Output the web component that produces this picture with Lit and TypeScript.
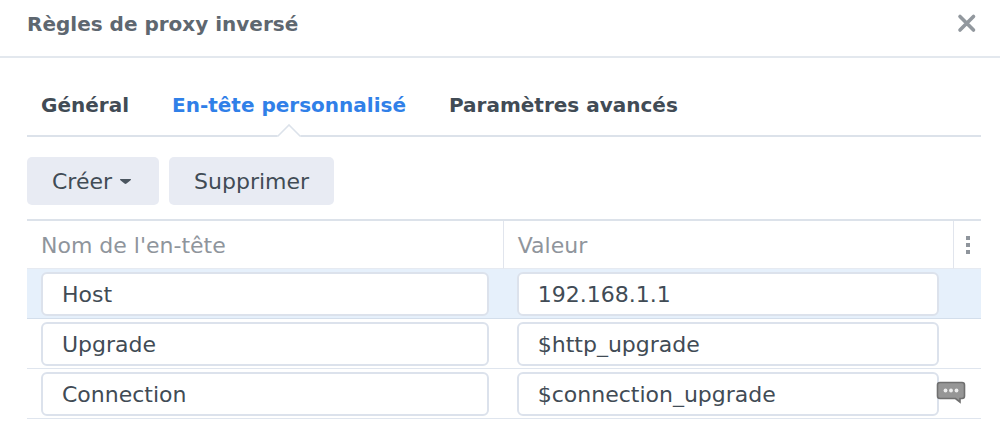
import { LitElement, html, css } from "lit";
import { customElement, state } from "lit/decorators.js";
import { classMap } from "lit/directives/class-map.js";

interface HeaderRule {
  name: string;
  value: string;
}

@customElement("app-root")
export class AppRoot extends LitElement {
  static styles = css`
    :host {
      display: block;
      background: #fff;
      color: #414b55;
      font-family: "DejaVu Sans", Verdana, sans-serif;
      font-size: 22px;
      line-height: 28px;
    }
    * {
      box-sizing: border-box;
    }
    button,
    input {
      font: inherit;
      color: inherit;
      margin: 0;
    }
    button {
      border: 0;
      padding: 0;
      background: none;
      cursor: pointer;
    }
    .titlebar {
      display: flex;
      align-items: center;
      justify-content: space-between;
      padding: 10px 22px 18px 27px;
      border-bottom: 2px solid #e3e8ee;
    }
    .title {
      margin: 0;
      font-size: 20px;
      line-height: 28px;
      font-weight: bold;
      color: #5e6770;
    }
    .close {
      display: flex;
    }
    .content {
      padding: 32px 19px 0 27px;
    }
    .tabs {
      display: flex;
      gap: 43px;
      padding: 0 14px;
      border-bottom: 2px solid #dce2ea;
    }
    .tab {
      position: relative;
      padding: 1px 0 16px;
      font-size: 20px;
      font-weight: bold;
    }
    .active {
      color: #3080e8;
    }
    .notch {
      position: absolute;
      left: calc(50% - 13px);
      bottom: -2px;
    }
    .toolbar {
      display: flex;
      gap: 10px;
      padding: 20px 0 14px;
    }
    .action {
      display: flex;
      align-items: center;
      gap: 8px;
      padding: 11px 25px 9px;
      border-radius: 5px;
      background: #e8ebf3;
    }
    .grid {
      width: 100%;
      table-layout: fixed;
      border-collapse: separate;
      border-spacing: 0;
      border-top: 2px solid #dce2ea;
    }
    .col-value {
      width: 47.2%;
    }
    .col-menu {
      width: 28px;
    }
    th {
      padding: 11px 14px 8px;
      border-bottom: 1px solid #e6eaf1;
      text-align: left;
      font-weight: normal;
      color: #8f959c;
    }
    th + th {
      border-left: 1px solid #e1e5ed;
    }
    th.menu-cell {
      padding: 0;
      vertical-align: middle;
    }
    .menu {
      display: flex;
      justify-content: center;
      width: 100%;
    }
    td {
      position: relative;
      padding: 3px 14px 2px;
      border-bottom: 1px solid #dfe5ee;
    }
    .selected td {
      background: #e6f0fb;
      border-bottom-color: #d3deeb;
    }
    .field {
      display: block;
      width: 100%;
      height: 44px;
      padding: 0 19px;
      border: 2px solid #dce2ec;
      border-radius: 6px;
      background: #fff;
      outline: 0;
    }
    .note {
      position: absolute;
      right: -13px;
      top: 12px;
    }
    .note svg,
    .close svg,
    .notch,
    .menu svg {
      display: block;
    }
  `;

  @state() private activeTab = 1;
  @state() private selectedRow = 0;

  private tabs = ["Général", "En-tête personnalisé", "Paramètres avancés"];

  private rules: HeaderRule[] = [
    { name: "Host", value: "192.168.1.1" },
    { name: "Upgrade", value: "$http_upgrade" },
    { name: "Connection", value: "$connection_upgrade" },
  ];

  private renderTab(label: string, index: number) {
    const active = index === this.activeTab;
    return html`<button
      class=${classMap({ tab: true, active })}
      role="tab"
      aria-selected=${active ? "true" : "false"}
      @click=${() => (this.activeTab = index)}
    >
      ${label}
      ${active
        ? html`<svg class="notch" width="26" height="13" viewBox="0 0 26 13" aria-hidden="true">
            <path d="M1 13V11H1.5L13 0L24.5 11H25V13Z" fill="#fff" />
            <path d="M0 12H2L13 1L24 12H26" fill="none" stroke="#dce2ea" stroke-width="1.6" />
          </svg>`
        : null}
    </button>`;
  }

  private renderRow(rule: HeaderRule, index: number) {
    return html`<tr
      class=${classMap({ selected: index === this.selectedRow })}
      @focusin=${() => (this.selectedRow = index)}
    >
      <td><input class="field" aria-labelledby="name-heading" .value=${rule.name} /></td>
      <td>
        <input class="field" aria-labelledby="value-heading" .value=${rule.value} />
        ${index === this.rules.length - 1
          ? html`<button class="note" aria-label="Commentaire">
              <svg width="30" height="23" viewBox="0 0 30 23">
                <path
                  d="M4 1.5H26Q28.5 1.5 28.5 4V15Q28.5 17.5 26 17.5H24V21L19.5 17.5H4Q1.5 17.5 1.5 15V4Q1.5 1.5 4 1.5Z"
                  fill="#969696"
                  stroke="#707070"
                  stroke-width="1.6"
                />
                <circle cx="9.5" cy="9.5" r="1.9" fill="#eee" />
                <circle cx="15" cy="9.5" r="1.9" fill="#eee" />
                <circle cx="20.5" cy="9.5" r="1.9" fill="#eee" />
              </svg>
            </button>`
          : null}
      </td>
      <td></td>
    </tr>`;
  }

  render() {
    return html`
      <header class="titlebar">
        <h1 class="title">Règles de proxy inversé</h1>
        <button class="close" aria-label="Fermer">
          <svg width="22" height="22" viewBox="0 0 22 22">
            <path d="M4 3.5L17.5 17M17.5 3.5L4 17" fill="none" stroke="#92989e" stroke-width="3.6" stroke-linecap="round" />
          </svg>
        </button>
      </header>
      <main class="content">
        <div class="tabs" role="tablist">${this.tabs.map((t, i) => this.renderTab(t, i))}</div>
        <div class="toolbar">
          <button class="action">
            Créer
            <svg width="14" height="6" viewBox="0 0 14 6" aria-hidden="true">
              <path d="M0 0H11Q11 1 10 1.8L6.5 4.6Q5.5 5.4 4.5 4.6L1 1.8Q0 1 0 0Z" fill="#4b555f" />
            </svg>
          </button>
          <button class="action">Supprimer</button>
        </div>
        <table class="grid">
          <colgroup>
            <col />
            <col class="col-value" />
            <col class="col-menu" />
          </colgroup>
          <thead>
            <tr>
              <th id="name-heading">Nom de l'en-tête</th>
              <th id="value-heading">Valeur</th>
              <th class="menu-cell">
                <button class="menu" aria-label="Colonnes">
                  <svg width="4" height="18" viewBox="0 0 4 18">
                    <path d="M0 0H4V4H0ZM0 7H4V11H0ZM0 14H4V18H0Z" fill="#8f959c" />
                  </svg>
                </button>
              </th>
            </tr>
          </thead>
          <tbody>
            ${this.rules.map((r, i) => this.renderRow(r, i))}
          </tbody>
        </table>
      </main>
    `;
  }
}
